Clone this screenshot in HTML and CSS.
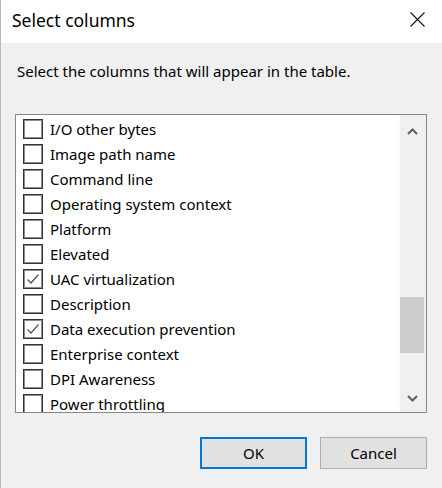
FILE: index.html
```html
<!DOCTYPE html>
<html lang="en">
<head>
<meta charset="utf-8">
<title>Select columns</title>
<link rel="stylesheet" href="styles.css">
</head>
<body>
<div class="dialog">
  <div class="titlebar">
    <span class="title">Select columns</span>
    <span class="close" aria-label="Close">
      <svg width="15" height="15" viewBox="0 0 15 15"><path d="M0.5 0.5 L14.5 14.5 M14.5 0.5 L0.5 14.5" stroke="#111" stroke-width="1.1" fill="none"/></svg>
    </span>
  </div>
  <div class="content">
    <p class="instruction">Select the columns that will appear in the table.</p>
    <div class="listbox">
      <ul class="items">
        <li class="item"><span class="box"></span><span class="label">I/O other bytes</span></li>
        <li class="item"><span class="box"></span><span class="label">Image path name</span></li>
        <li class="item"><span class="box"></span><span class="label">Command line</span></li>
        <li class="item"><span class="box"></span><span class="label">Operating system context</span></li>
        <li class="item"><span class="box"></span><span class="label">Platform</span></li>
        <li class="item"><span class="box"></span><span class="label">Elevated</span></li>
        <li class="item"><span class="box checked"><svg width="16" height="16" viewBox="0 0 16 16"><path d="M2.5 8.5 L6 12 L13.5 3.5" stroke="#555" stroke-width="1.3" fill="none"/></svg></span><span class="label">UAC virtualization</span></li>
        <li class="item"><span class="box"></span><span class="label">Description</span></li>
        <li class="item"><span class="box checked"><svg width="16" height="16" viewBox="0 0 16 16"><path d="M2.5 8.5 L6 12 L13.5 3.5" stroke="#555" stroke-width="1.3" fill="none"/></svg></span><span class="label">Data execution prevention</span></li>
        <li class="item"><span class="box"></span><span class="label">Enterprise context</span></li>
        <li class="item"><span class="box"></span><span class="label">DPI Awareness</span></li>
        <li class="item"><span class="box"></span><span class="label">Power throttling</span></li>
      </ul>
      <div class="scrollbar">
        <span class="arrow">
          <svg width="11" height="7" viewBox="0 0 11 7"><path d="M1 6 L5.5 1.5 L10 6" stroke="#606060" stroke-width="2" fill="none"/></svg>
        </span>
        <div class="track"><div class="thumb"></div></div>
        <span class="arrow">
          <svg width="11" height="7" viewBox="0 0 11 7"><path d="M1 1 L5.5 5.5 L10 1" stroke="#606060" stroke-width="2" fill="none"/></svg>
        </span>
      </div>
    </div>
    <div class="buttons">
      <button class="btn default">OK</button>
      <button class="btn">Cancel</button>
    </div>
  </div>
</div>
</body>
</html>
```

FILE: styles.css
```css
* { box-sizing: border-box; }
html, body { margin: 0; padding: 0; }
body {
  width: 442px;
  height: 488px;
  background: #f0f0f0;
  font-family: "Noto Sans", "Open Sans", sans-serif;
  color: #000;
  overflow: hidden;
}
.dialog {
  width: 442px;
  height: 488px;
  border-left: 1px solid #b8b8b8;
  display: flex;
  flex-direction: column;
}
.titlebar {
  height: 43px;
  background: #fff;
  display: flex;
  align-items: center;
  justify-content: space-between;
  padding: 0 17px 0 11px;
}
.title {
  font-size: 17.5px;
  line-height: 24px;
  padding-bottom: 3px;
}
.close { display: flex; margin-bottom: 4px; }
.content {
  padding: 0 15px 0 14px;
  display: flex;
  flex-direction: column;
}
.instruction {
  margin: 18px 0 0 2px;
  font-size: 15px;
  line-height: 20px;
  height: 53px;
}
.listbox {
  height: 299px;
  border: 1px solid #828790;
  background: #fff;
  display: flex;
  overflow: hidden;
}
.items {
  list-style: none;
  margin: 0;
  padding: 0 0 0 7px;
  flex: 1;
  overflow: hidden;
}
.item {
  height: 25px;
  display: flex;
  align-items: center;
  gap: 7px;
  font-size: 15px;
  padding-top: 3px;
}
.box {
  width: 20px;
  height: 20px;
  border: 1px solid #333;
  box-shadow: inset 0 0 0 1px #8c8c8c;
  background: #fff;
  display: flex;
  align-items: center;
  justify-content: center;
  flex: none;
}
.scrollbar {
  width: 27px;
  background: #f0f0f0;
  border-left: 1px solid #fbfbfb;
  display: flex;
  flex-direction: column;
  flex: none;
}
.arrow {
  height: 30px;
  display: flex;
  align-items: center;
  justify-content: center;
  padding-right: 1px;
  padding-top: 2px;
}
.track {
  flex: 1;
  padding-top: 152px;
}
.thumb {
  width: 24px;
  height: 56px;
  background: #cdcdcd;
}
.buttons {
  display: flex;
  justify-content: flex-end;
  gap: 13px;
  margin-top: 24px;
}
.btn {
  width: 107px;
  height: 32px;
  background: #e1e1e1;
  border: 1px solid #adadad;
  font-family: inherit;
  font-size: 15px;
  color: #000;
  padding: 0;
}
.btn.default {
  border: 2px solid #0078d7;
}
```
